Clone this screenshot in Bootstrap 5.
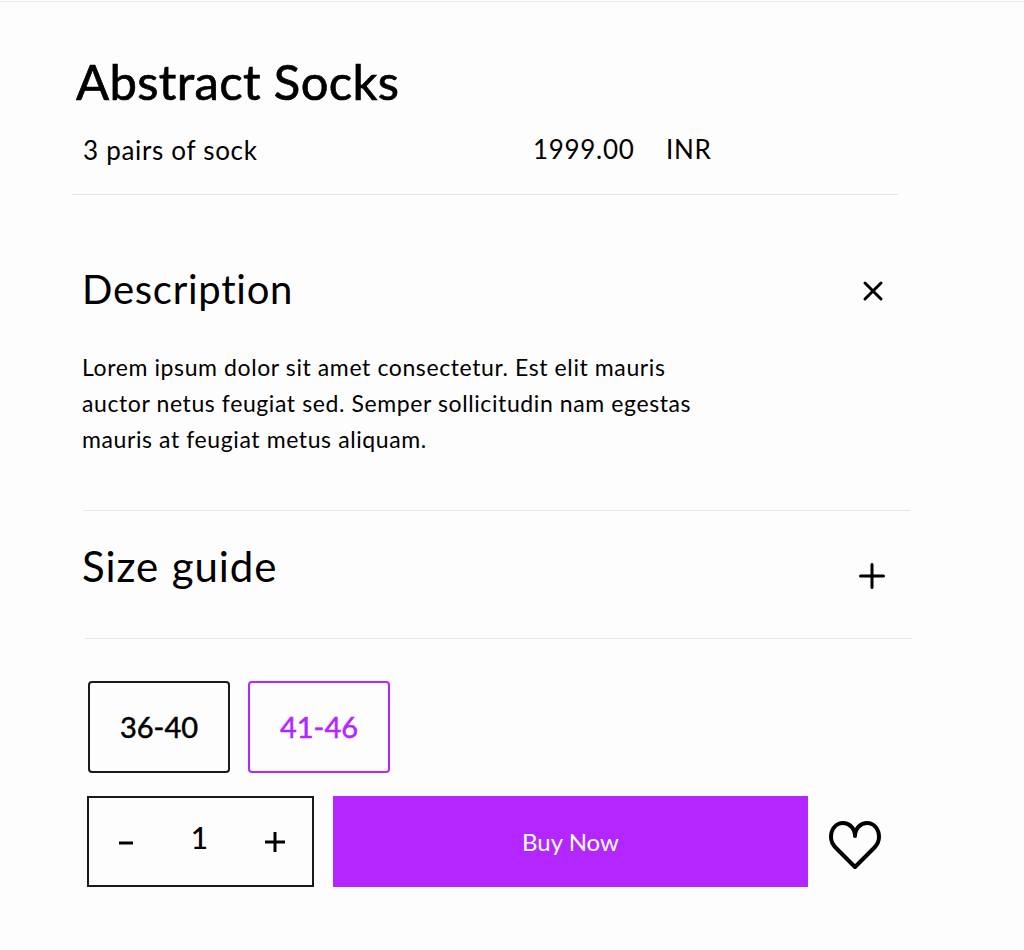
<!doctype html>
<html lang="en">
<head>
<meta charset="utf-8">
<title>Abstract Socks</title>
<link href="https://cdn.jsdelivr.net/npm/bootstrap@5.3.0/dist/css/bootstrap.min.css" rel="stylesheet">
<style>
html,body{height:100%}
body{background:#fdfdfd;color:#000;font-family:"Lato","Liberation Sans",sans-serif;font-weight:400;font-variant-ligatures:none}
.sheet{width:1024px;height:950px;border-top:1px solid #ececec;margin-top:1px;overflow:hidden}
.head-title{font-size:49px;font-weight:400;line-height:60px;margin:49px 0 0 76px;letter-spacing:.36px;-webkit-text-stroke:.7px #000}
.head-row{margin:0 0 0 72px;width:826px;height:84px;padding-top:22px;border-bottom:1px solid #e6e6e6}
.sub-text{font-size:26px;line-height:34px;margin-left:11px;width:450px;letter-spacing:.7px}
.price-text{font-size:26px;line-height:32px;letter-spacing:.7px}
.price-num{width:133px}
.sec-a{margin:0 0 0 83px;width:827px;height:316px;border-bottom:1px solid #e6e6e6}
.sec-title{font-size:40px;line-height:48px;font-weight:400;letter-spacing:.75px;margin-left:-1px}
.sec-a .sec-title{margin-top:70px}
.glyph-btn{background:none;border:0;padding:0;line-height:0}
.x-pos{margin:85px 26px 0 0}
.body-copy{font-size:23px;line-height:36px;width:630px;margin-top:36px;letter-spacing:.6px;margin-left:-1px}
.sec-b{margin:0 0 0 85px;width:827px;height:128px;border-bottom:1px solid #e6e6e6}
.sec-b .sec-title{font-size:42px;margin:31px 0 0 -3px;letter-spacing:.9px;word-spacing:1px}
.plus-pos{margin:52px 27px 0 0}
.size-row{margin:42px 0 0 88px;gap:18px}
.size-chip{width:142px;height:92px;border:2px solid #1a1a1a;border-radius:4px;background:transparent;color:#000;font-size:29px;font-weight:400;-webkit-text-stroke:.5px currentColor;display:flex;align-items:center;justify-content:center;padding:0}
.size-chip.picked{border-color:#b326ff;color:#b326ff}
.buy-row{margin:23px 0 0 87px}
.qty-box{width:227px;height:91px;border:2px solid #1a1a1a;font-size:30px;font-weight:500;line-height:1;padding:0 26px 0 30px}
.qty-box button{background:none;border:0;padding:0;color:#000;line-height:0}
.qty-num{margin:-10px 0 0 2px}
.buy-btn{width:475px;height:91px;margin-left:19px;background:#b326ff;border:0;border-radius:0;color:#fff;font-size:24px;padding:0}
.buy-btn:hover{background:#b326ff;color:#fff}
.heart-btn{margin:6px 0 0 20px}
</style>
</head>
<body>
<div class="sheet">
  <h1 class="head-title">Abstract Socks</h1>
  <div class="head-row d-flex">
    <div class="sub-text">3 pairs of sock</div>
    <div class="price-text price-num">1999.00</div>
    <div class="price-text">INR</div>
  </div>

  <section class="sec-a">
    <div class="d-flex justify-content-between align-items-start">
      <h2 class="sec-title mb-0">Description</h2>
      <button class="glyph-btn x-pos" type="button" aria-label="Collapse">
        <svg width="22" height="22" viewBox="0 0 22 22"><path d="M3 3L19 19M19 3L3 19" stroke="#000" stroke-width="3" stroke-linecap="round"/></svg>
      </button>
    </div>
    <p class="body-copy mb-0">Lorem ipsum dolor sit amet consectetur. Est elit mauris auctor netus feugiat sed. Semper sollicitudin nam egestas mauris at feugiat metus aliquam.</p>
  </section>

  <section class="sec-b d-flex justify-content-between align-items-start">
    <h2 class="sec-title mb-0">Size guide</h2>
    <button class="glyph-btn plus-pos" type="button" aria-label="Expand">
      <svg width="26" height="26" viewBox="0 0 26 26"><path d="M13 1.500V24.500M1.500 13H24.500" stroke="#000" stroke-width="3" stroke-linecap="round"/></svg>
    </button>
  </section>

  <div class="size-row d-flex">
    <button class="size-chip" type="button">36-40</button>
    <button class="size-chip picked" type="button">41-46</button>
  </div>

  <div class="buy-row d-flex align-items-center">
    <div class="qty-box d-flex align-items-center justify-content-between">
      <button type="button" aria-label="Less"><svg width="14" height="4" viewBox="0 0 14 4"><path d="M0 2H14" stroke="#000" stroke-width="3"/></svg></button>
      <span class="qty-num">1</span>
      <button type="button" aria-label="More"><svg width="22" height="22" viewBox="0 0 22 22"><path d="M11 1V21M1 11H21" stroke="#000" stroke-width="3"/></svg></button>
    </div>
    <button class="btn buy-btn" type="button">Buy Now</button>
    <button class="glyph-btn heart-btn" type="button" aria-label="Wishlist">
      <svg width="54" height="50" viewBox="0 0 54 50"><path d="M27 16C27 8 21 3 15 3C8 3 3 9 3 17C3 22 5 25 8 28L27 47L46 28C49 25 51 22 51 17C51 9 46 3 39 3C33 3 27 8 27 16Z" fill="none" stroke="#000" stroke-width="4" stroke-linejoin="round"/></svg>
    </button>
  </div>
</div>
<script src="https://cdn.jsdelivr.net/npm/bootstrap@5.3.0/dist/js/bootstrap.bundle.min.js"></script>
</body>
</html>
